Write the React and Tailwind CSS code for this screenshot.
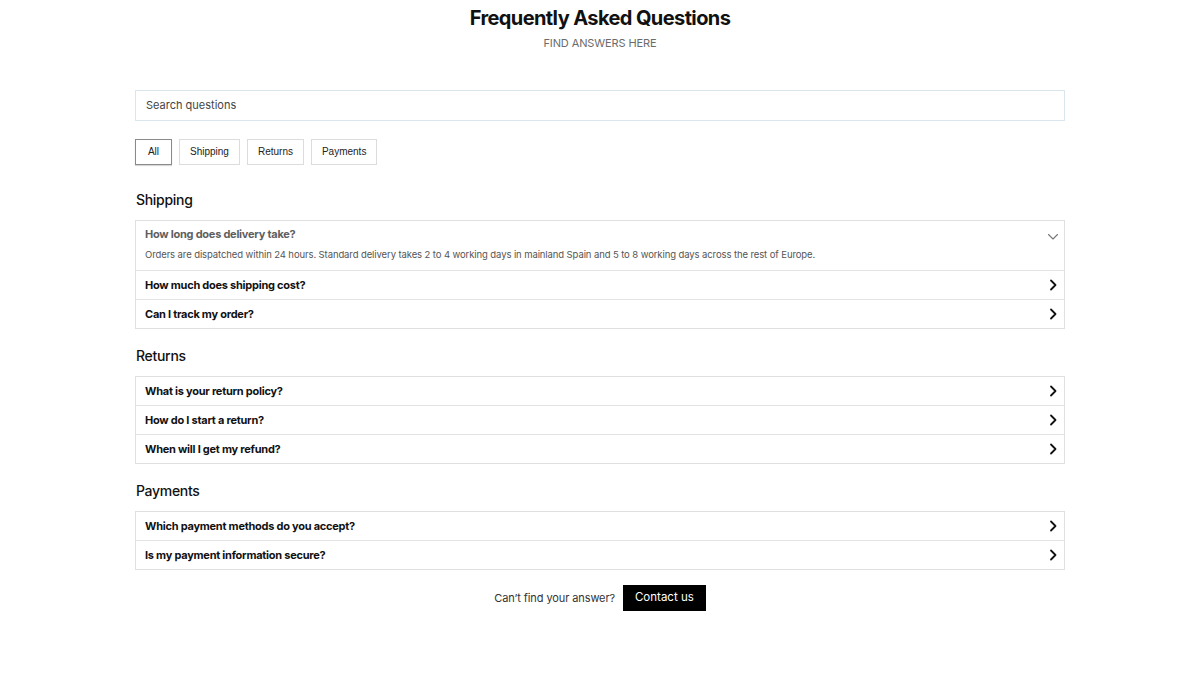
import { useState } from 'react';

const FAQS = [
  {
    section: 'Shipping',
    items: [
      {
        q: 'How long does delivery take?',
        a: 'Orders are dispatched within 24 hours. Standard delivery takes 2 to 4 working days in mainland Spain and 5 to 8 working days across the rest of Europe.',
      },
      { q: 'How much does shipping cost?', a: '' },
      { q: 'Can I track my order?', a: '' },
    ],
  },
  {
    section: 'Returns',
    items: [
      { q: 'What is your return policy?', a: '' },
      { q: 'How do I start a return?', a: '' },
      { q: 'When will I get my refund?', a: '' },
    ],
  },
  {
    section: 'Payments',
    items: [
      { q: 'Which payment methods do you accept?', a: '' },
      { q: 'Is my payment information secure?', a: '' },
    ],
  },
];

const FILTERS = ['All', 'Shipping', 'Returns', 'Payments'];

const ChevronRight = () => (
  <svg width="12" height="12" viewBox="0 0 12 12" fill="none" stroke="#111" strokeWidth="1.8" strokeLinecap="round" strokeLinejoin="round">
    <path d="M4 1.5 8.5 6 4 10.5" />
  </svg>
);

const ChevronDown = () => (
  <svg width="12" height="8" viewBox="0 0 12 8" fill="none" stroke="#777" strokeWidth="1.1" strokeLinecap="round" strokeLinejoin="round">
    <path d="M1.5 1.5 6 6l4.5-4.5" />
  </svg>
);

const FaqItem = ({ item, open, onToggle, last }) => (
  <div className={last ? '' : 'border-b border-[#e3e3e3]'}>
    <button
      onClick={onToggle}
      className="w-full flex items-center justify-between pl-[9px] pr-[5px] h-[28px] text-left"
    >
      <span className={`text-[11px] font-bold tracking-[-0.25px] ${open ? 'text-[#5f5f5f]' : 'text-[#111]'}`}>{item.q}</span>
      {open ? <span className="mt-[4px]"><ChevronDown /></span> : <ChevronRight />}
    </button>
    {open && (
      <p className="pl-[9px] pr-4 pb-[8px] -mt-[1px] text-[9.5px] text-[#555] tracking-[-0.1px]">{item.a}</p>
    )}
  </div>
);

const App = () => {
  const [filter, setFilter] = useState('All');
  const [openId, setOpenId] = useState('Shipping-0');

  const sections = FAQS.filter((s) => filter === 'All' || s.section === filter);

  return (
    <div className="min-h-screen bg-white font-['Inter',sans-serif]">
      <div className="w-[930px] mx-auto pt-[5px]">
        {/* Header */}
        <div className="text-center">
          <h1 className="text-[20px] font-bold text-[#111] tracking-[-0.6px] leading-[26px]">Frequently Asked Questions</h1>
          <p className="text-[11px] text-[#6b6b6b] uppercase mt-[4px] tracking-[-0.1px]">Find answers here</p>
        </div>

        {/* Search */}
        <input
          type="text"
          placeholder="Search questions"
          className="mt-[38px] w-full h-[31px] border border-[#d9e6ee] px-[10px] text-[11px] placeholder:text-[#444] outline-none"
        />

        {/* Filters */}
        <div className="flex gap-[7px] mt-[18px] font-['Liberation_Sans',sans-serif]">
          {FILTERS.map((f) => (
            <button
              key={f}
              onClick={() => setFilter(f)}
              className={`h-[26px] min-w-[37px] px-[10px] text-[10px] text-[#222] bg-white border ${
                filter === f ? 'border-[#8a8a8a] shadow-[0_1px_1px_rgba(0,0,0,0.15)]' : 'border-[#dcdcdc]'
              }`}
            >
              {f}
            </button>
          ))}
        </div>

        {/* Sections */}
        <div className="mt-[25px] flex flex-col gap-[17px]">
          {sections.map((s) => (
            <div key={s.section}>
              <h2 className="text-[14px] font-medium text-[#111] pl-[1px] leading-[20px] tracking-[-0.3px]">{s.section}</h2>
              <div className="mt-[10px] border border-[#e0e0e0]">
                {s.items.map((item, i) => {
                  const id = `${s.section}-${i}`;
                  return (
                    <FaqItem
                      key={id}
                      item={item}
                      open={openId === id}
                      last={i === s.items.length - 1}
                      onToggle={() => setOpenId(openId === id ? null : id)}
                    />
                  );
                })}
              </div>
            </div>
          ))}
        </div>

        {/* Contact */}
        <div className="flex items-center justify-center gap-[8px] mt-[15px]">
          <span className="text-[11px] text-[#333] tracking-[-0.1px]">Can’t find your answer?</span>
          <button className="h-[26px] px-[12px] bg-black text-white text-[11.5px]">Contact us</button>
        </div>
      </div>
    </div>
  );
};

export default App;
